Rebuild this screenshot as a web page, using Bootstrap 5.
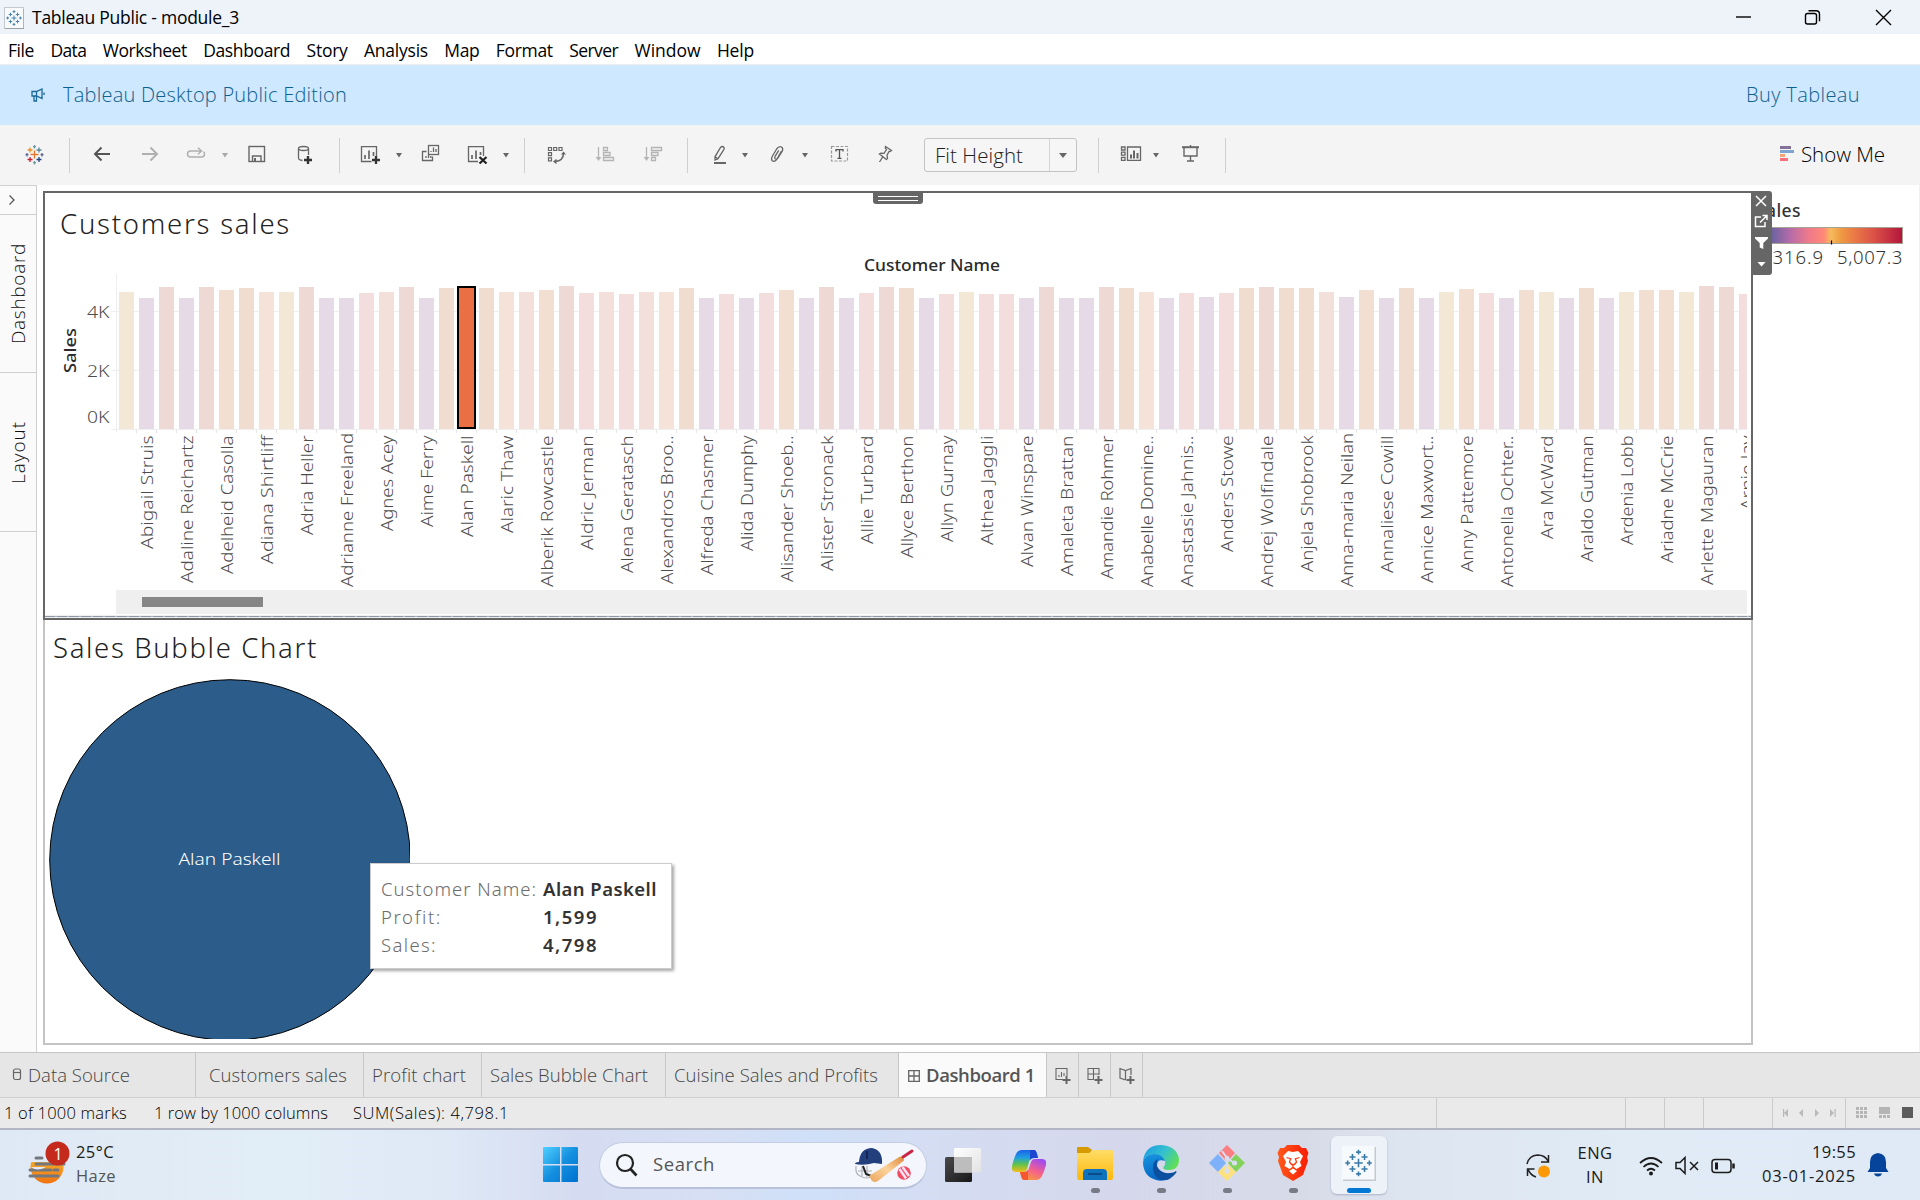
<!DOCTYPE html>
<html lang="en">
<head>
<meta charset="utf-8">
<title>Tableau Public - module_3</title>
<link href="https://cdn.jsdelivr.net/npm/bootstrap@5.3.0/dist/css/bootstrap.min.css" rel="stylesheet">
<style>
body{font-family:"Open Sans","Noto Sans",sans-serif;width:1920px;height:1200px;overflow:hidden;background:#fff;line-height:1;color:#000}
svg{display:block;flex:none}
.fit{white-space:nowrap;flex:none}
.titlebar{height:34px;background:#eef3fa;font-size:17.5px;padding-top:1px}
.menubar{height:31px;gap:16.4px;padding:3px 0 0 8px;font-size:17.5px;border-bottom:1px solid #ececec}
.banner{height:60px;background:#cde8ff;color:#0d608f;font-size:20px;font-weight:350}
.tools{height:60px;background:#f4f4f4;padding-left:22px}
.tools .sep{width:1px;height:35px;background:#cfcfcf;flex:none}
.caret-s{width:8px;height:24px}
.g9{margin-left:9px}.g12{margin-left:12px}.g13{margin-left:13px}.g14{margin-left:14px}.g15{margin-left:15px}.g16{margin-left:16px}.g18{margin-left:18px}.g19{margin-left:19px}.g20{margin-left:20px}.g21{margin-left:21px}.g22{margin-left:22px}.g23{margin-left:23px}.g24{margin-left:24px}.g27{margin-left:27px}
.combo{width:153px;height:34px;border:1px solid #c3c3c3;border-radius:3px;background:#f6f6f6;font-size:20.5px;color:#222;font-weight:350;flex:none}
.combo .arrow{width:27px;border-left:1px solid #d4d4d4}
.workspace{height:867px}
.rail{width:37px;background:#fafafa;border-right:1px solid #cfcfcf;border-top:1px solid #cfcfcf;flex:none}
.rail>div{border-bottom:1px solid #cfcfcf}
.rail .r0{height:29px;padding-left:8px}.rail .r1{height:158px}.rail .r2{height:159px}
.vert{writing-mode:vertical-rl;transform:rotate(180deg);font-size:19px;color:#111;font-weight:350}
.boards{width:1710px;margin-left:6px;padding-top:6px;flex:none}
.zone-top{height:429px;border:2px solid #666}
.zone-low{height:425px;border:2px solid #c4c4c4;border-top:0}
.zone-title{font-family:"Noto Sans","Open Sans",sans-serif;font-size:27.5px;color:#222;font-weight:350}
.zone-top .zone-title{height:57px;padding:17px 0 0 15px}
.zone-low .zone-title{height:55px;padding:14px 0 0 8px}
.grip{left:828px;top:-1px;width:50px;height:12px;background:#666;border-radius:0 0 3px 3px;padding:4px 5px;gap:3px}
.grip i{height:1px;background:#fff}
.side-tools{left:1706px;top:-2px;width:21px;height:84px;background:#666;border-radius:0 3px 3px 0}
.tip{left:325px;top:243px;width:302px;height:106px;background:#fff;border:1px solid #ccc;box-shadow:2px 2px 3px rgba(0,0,0,.35);padding:11px 0 0 10px;font-family:"Noto Sans","Open Sans",sans-serif;font-size:18.5px}
.tip .line{height:28px}
.tip .key{width:162px;color:#6c6c6c;font-weight:300}
.tip .val{font-weight:600;color:#333}
.legend-col{border-right:1px solid #f0f0f0;padding:17px 16px 0 3px;font-family:"Noto Sans","Open Sans",sans-serif}
.ramp{height:17px;border:1px solid #a6a294;margin-top:7px;background:linear-gradient(90deg,#4d5b9c 0,#6a63a0 10%,#b56ca8 23%,#f07a8a 36%,#ff8878 46%,#f6bb5c 51%,#ee9a42 58%,#ea7a45 67%,#dc5347 80%,#b3163c 100%)}
.tabs{height:46px;background:#e6e6e6;border-top:1px solid #c6c6c6;border-bottom:1px solid #cfcfcf;font-size:18.5px;color:#444;font-weight:350}
.tabs>div{border-right:1px solid #c6c6c6;height:44px;flex:none;padding-top:1px}
.t1{width:196px;padding-left:12px}.t2{width:168px;padding-left:13px}.t3{width:118px;padding-left:8px}.t4{width:184px;padding-left:8px}.t5{width:233px;padding-left:8px}.t6{width:148px;padding-left:9px;background:#fafafa;font-weight:600;color:#555}.t7{width:32px;justify-content:center}
.status{height:30px;background:#eaeaea;font-size:16.5px;padding-left:4px}
.status .fit{font-weight:350}
.status .cell{border-left:1px solid #cbcbcb;height:30px;flex:none}
.c1{width:189px}.c2{width:39px}.c4{width:69px}.c5{width:73px}.c6{width:75px}
.taskbar{height:72px;border-top:2px solid #b2b6c4;padding-top:1px;background:linear-gradient(90deg,#dfe9f5 0,#e1edf7 15%,#dfe9f6 23%,#d5dcf1 30%,#d6dff4 37%,#cfe0f8 42%,#d4ddf3 48%,#d5d8ec 58%,#d7dbe8 68%,#dde5f0 73%,#e0ebf6 85%,#dfeaf6 100%);font-size:17px;color:#1b1b1b}
.weather{width:543px;padding-left:27px}
.search-pill{width:328px;height:47px;margin-left:20px;border-radius:24px;background:#f3f6fc;border:1px solid #c3cde2;border-bottom:2px solid #b7c1da;padding:0 12px 0 15px;font-size:18.5px;color:#555}
.app{width:58px;height:58px;border-radius:6px;flex:none}
.app.on{background:#edf1f8;box-shadow:0 1px 2px rgba(60,70,110,.3)}
.app .dot{width:9px;height:5px;border-radius:3px;background:#777b86}
.app.on .dot{width:24px;background:#0078d4}
.lh24{line-height:24px}
</style>
<script src="https://cdn.jsdelivr.net/npm/bootstrap@5.3.0/dist/js/bootstrap.bundle.min.js"></script>
</head>
<body class="d-flex flex-column">
<svg width="0" height="0" class="position-absolute">
 <defs>
  <symbol id="caret" viewBox="0 0 8 24"><path d="M1 10h6L4 14.5z" fill="#666"/></symbol>
  <symbol id="caretdim" viewBox="0 0 8 24"><path d="M1 10h6L4 14.5z" fill="#a8a8a8"/></symbol>
  <symbol id="crosses" viewBox="0 0 24 24">
   <path d="M12 8.500v7M8.500 12h7M7 4.500v5M4.500 7h5M17 4.500v5M14.500 7h5M7 14.500v5M4.500 17h5M17 14.500v5M14.500 17h5M12 1v4M10 3h4M12 19v4M10 21h4M3 10v4M1 12h4M21 10v4M19 12h4" fill="none" stroke="#3b7ba8" stroke-width="1.3"/>
  </symbol>
 </defs>
</svg>

<header class="titlebar d-flex align-items-center">
 <svg width="20" height="22" viewBox="0 0 20 22" style="margin-left:4px"><rect x=".5" y=".5" width="19" height="21" fill="#f8fafc" stroke="#c3c8d0"/><path d="M1 21.500h19V2" fill="none" stroke="#9aa0a8"/><use href="#crosses" x="1.500" y="1.500" width="17" height="19"/></svg>
 <span class="fit ms-2" data-w="207">Tableau Public - module_3</span>
 <svg class="ms-auto" width="184" height="34" viewBox="1736 0.500 184 34" fill="none" stroke="#000" stroke-width="1.4"><path d="M1736 16.500h15"/><rect x="1805.500" y="13" width="11" height="10.500" rx="2"/><path d="M1808.500 10.200h7.500q3.500 0 3.500 3.500v7"/><path d="M1876 9.500l15 15M1891 9.500l-15 15"/></svg>
</header>

<nav class="menubar d-flex align-items-center">
 <span class="fit" data-w="26">File</span><span class="fit" data-w="36">Data</span><span class="fit" data-w="84">Worksheet</span><span class="fit" data-w="87">Dashboard</span><span class="fit" data-w="41">Story</span><span class="fit" data-w="64">Analysis</span><span class="fit" data-w="35">Map</span><span class="fit" data-w="57">Format</span><span class="fit" data-w="49">Server</span><span class="fit" data-w="66">Window</span><span class="fit" data-w="37">Help</span>
</nav>

<div class="banner d-flex align-items-center">
 <svg width="14" height="14" viewBox="0 0 14 14" style="margin-left:31px" fill="none" stroke="#16699a" stroke-width="1.3"><path d="M1 3.500h4.500L11 1v9.500L5.500 8H1zM3 8v5h2.500V8M5.500 3.500V8M13 4.500v2.500"/></svg>
 <span class="fit" style="margin-left:18px" data-w="284">Tableau Desktop Public Edition</span>
 <span class="fit ms-auto" style="margin-right:60px" data-w="114">Buy Tableau</span>
</div>

<div class="tools d-flex align-items-center">
 <svg width="24" height="24" viewBox="0 0 24 24" fill="none" stroke-width="1.300"><path d="M12.500 7.500v8M8.500 11.500h8" stroke="#e8762c"/><path d="M8 4.500v5M5.500 7h5" stroke="#eb9129"/><path d="M17 4.500v5M14.500 7h5" stroke="#5b879b"/><path d="M8 14v5M5.500 16.500h5" stroke="#c72035"/><path d="M17 14v5M14.500 16.500h5" stroke="#1f447e"/><path d="M12.500 2v3.500M11 3.700h3M12.500 18v3.500M11 19.700h3" stroke="#7199a6"/><path d="M5 10v3.500M3.500 11.700H6.500M20 10v3.500M18.500 11.700h3" stroke="#5c6692"/></svg>
 <i class="sep g23"></i>
 <svg class="g20" width="24" height="24" viewBox="0 0 24 24" fill="none" stroke="#555" stroke-width="2"><path d="M20 11H5M11.500 4.500L5 11l6.500 6.500"/></svg>
 <svg class="g24" width="24" height="24" viewBox="0 0 24 24" fill="none" stroke="#b0b0b0" stroke-width="2"><path d="M4 11h15M12.500 4.500L19 11l-6.500 6.500"/></svg>
 <svg class="g22" width="24" height="24" viewBox="0 0 24 24" fill="none" stroke="#b0b0b0" stroke-width="1.500"><path d="M11 8H6.500Q3.500 8 3.500 11t3 3h11q3 0 3-3 0-1.500-1-2.300M8 8h9M14 4.800L17.500 8 14 11.200"/></svg>
 <svg class="caret-s g13"><use href="#caretdim"/></svg>
 <svg class="g16" width="24" height="24" viewBox="0 0 24 24" fill="none" stroke="#666" stroke-width="1.400"><rect x="4" y="3.500" width="15.500" height="15"/><path d="M7.500 18.500V13h8.500v5.500"/><path d="M10 15v3.500" stroke-width="2"/></svg>
 <svg class="g24" width="24" height="24" viewBox="0 0 24 24" fill="none" stroke="#666" stroke-width="1.300"><ellipse cx="10.500" cy="5.500" rx="5" ry="2"/><path d="M5.500 5.500V15q0 2 4 2.500M15.500 5.500V12"/><path d="M15 13v8M11 17h8" stroke="#333" stroke-width="2.400"/></svg>
 <i class="sep g22"></i>
 <svg class="g18" width="24" height="24" viewBox="0 0 24 24" fill="none" stroke="#666" stroke-width="1.300"><path d="M13.500 18.500H3.500V3.600h15V14"/><path d="M7 12v4M11 7.500v8.500M15.500 9v4" stroke-width="1.700"/><path d="M18 13v8M14 17h8" stroke="#333" stroke-width="2.300"/></svg>
 <svg class="caret-s g13"><use href="#caret"/></svg>
 <svg class="g15" width="24" height="24" viewBox="0 0 24 24" fill="none" stroke="#666" stroke-width="1.300"><rect x="10.500" y="2.500" width="10" height="9"/><path d="M8.500 8.500h-4v9h10V13.500M13 9V8M15.500 9V4.500M18 9V6M8 15v-2M10.500 15v-3M12.800 15v-2" /></svg>
 <svg class="g24" width="24" height="24" viewBox="0 0 24 24" fill="none" stroke="#666" stroke-width="1.300"><path d="M12 18.500H2.500V3.600h15V13"/><path d="M6 12v4M10 7.500v8.500M14.500 9v3" stroke-width="1.700"/><path d="M13.500 14l7 6.500M20.500 14l-7 6.500" stroke="#222" stroke-width="2.300"/></svg>
 <svg class="caret-s g12"><use href="#caret"/></svg>
 <i class="sep g14"></i>
 <svg class="g19" width="24" height="24" viewBox="0 0 24 24" fill="none" stroke="#666" stroke-width="1.200"><path d="M4.500 4.500h3v3h-3zM9.700 4.500h3v3h-3zM15 4.500h3v3h-3zM4.500 9.700h3v3h-3zM4.500 14.800h3v3h-3z"/><path d="M19.500 10q0 8-8.500 8.500" stroke-width="1.500"/><path d="M17 11.500l2.600-3 2.400 3zM12.500 15.700L9 18.500l3.500 2.700z" fill="#666" stroke="none"/></svg>
 <svg class="g24" width="24" height="24" viewBox="0 0 24 24" fill="none" stroke="#b4b4b4" stroke-width="1.300"><path d="M6.500 4v11M11.500 4.500h4v3h-4zM11.500 9.500h6.500v3h-6.500zM11.500 14.500h10v3h-10z"/><path d="M3.700 14h5.600l-2.800 4z" fill="#b4b4b4" stroke="none"/></svg>
 <svg class="g24" width="24" height="24" viewBox="0 0 24 24" fill="none" stroke="#b4b4b4" stroke-width="1.300"><path d="M6.500 4v11M11.500 4.500h10v3h-10zM11.500 9.500h6.500v3h-6.500zM11.500 14.500h4v3h-4z"/><path d="M3.700 14h5.600l-2.800 4z" fill="#b4b4b4" stroke="none"/></svg>
 <i class="sep g23"></i>
 <svg class="g20" width="24" height="24" viewBox="0 0 24 24" fill="none" stroke="#666" stroke-width="1.300"><path d="M12.500 4.500q2-2 3.500 0 .5 1-.2 2.200l-5.800 9-3 1.300v-3.200zM7 13.800l3 1.900"/><path d="M6 20h12" stroke-width="2"/></svg>
 <svg class="caret-s g9"><use href="#caret"/></svg>
 <svg class="g16" width="24" height="24" viewBox="0 0 24 24" fill="none" stroke="#666" stroke-width="1.300"><path d="M16.500 8l-4.700 8.300q-2.300 3-4.500 1.500-1.500-1.500-.2-4l4.500-7.800q2.500-3.500 5-2 2 1.500.5 4.500l-4.200 6.500q-1.500 1.700-2.700.8-1-.8-.1-2.500l3.600-6"/></svg>
 <svg class="caret-s g12"><use href="#caret"/></svg>
 <svg class="g18" width="24" height="24" viewBox="0 0 24 24" fill="none"><rect x="4.500" y="3.500" width="16" height="14.500" stroke="#999" stroke-width="1.200" stroke-dasharray="3 1.500"/><path d="M9 8.500V6.700h7v1.800M12.500 6.700v8.600M10.500 15.300h4" stroke="#555" stroke-width="1.300"/></svg>
 <svg class="g22" width="24" height="24" viewBox="0 0 24 24" fill="none" stroke="#666" stroke-width="1.300"><path d="M12.500 3.500l6 4-1.500 1-.8-.3-2.200 4 .5 3.300-1.200 1L6.500 11l1.300-.8 3.200.2 2.500-3.800-1.200-1.500zM10 13.500l-3.500 5.500"/></svg>
 <div class="combo g27 d-flex"><span class="flex-fill d-flex align-items-center" style="padding-left:10px"><span class="fit" data-w="88">Fit Height</span></span><span class="arrow d-flex align-items-center justify-content-center"><svg width="8" height="5"><path d="M0 0h8L4 5z" fill="#666"/></svg></span></div>
 <i class="sep g21"></i>
 <svg class="g20" width="24" height="24" viewBox="0 0 24 24" fill="none" stroke="#666" stroke-width="1.300"><path d="M2.500 4H6v3H2.500zM2.500 9.200H6v3H2.500zM2.500 14.300H6v3H2.500zM8.500 4h13v13.300h-13z"/><path d="M12 15.500v-4M15 15.500v-8M18.500 15.500V10" stroke-width="2"/></svg>
 <svg class="caret-s g9"><use href="#caret"/></svg>
 <svg class="g18" width="24" height="24" viewBox="0 0 24 24" fill="none" stroke="#666" stroke-width="1.400"><path d="M4 4.200h17" stroke-width="2"/><path d="M6 4.500V13h13V4.500M12.500 13v4.500M9 18h7M12.500 2v2"/></svg>
 <i class="sep g23"></i>
 <svg class="ms-auto" width="14" height="16" style="margin-bottom:2px"><path d="M0 0h11v3H0z" fill="#84719b"/><path d="M0 4h14v3H0z" fill="#7fa4d0"/><path d="M0 8h5v3H0z" fill="#f4a379"/><path d="M0 12h8v3H0z" fill="#fb6e7c"/></svg>
 <span class="fit" style="font-size:20.5px;font-weight:350;margin:0 35px 2px 7px" data-w="84">Show Me</span>
</div>

<main class="workspace d-flex">
 <aside class="rail d-flex flex-column">
  <div class="r0 d-flex align-items-center"><svg width="8" height="10" fill="none" stroke="#555" stroke-width="1.300"><path d="M1.500.5L6 5 1.500 9.500"/></svg></div>
  <div class="r1 d-flex align-items-center justify-content-center"><span class="fit vert" data-w="101">Dashboard</span></div>
  <div class="r2 d-flex align-items-center justify-content-center"><span class="fit vert" data-w="63">Layout</span></div>
 </aside>
 <section class="boards">
  <div class="zone-top position-relative">
   <div class="zone-title"><span class="fit" data-w="231">Customers sales</span></div>
   <svg id="barchart" width="1706" height="368" viewBox="45 250 1706 368"></svg>
   <div class="grip position-absolute d-flex flex-column"><i></i><i></i></div>
   <svg class="side-tools position-absolute" viewBox="0 0 21 84" fill="none" stroke="#fff" stroke-width="1.500"><path d="M5 5l10 10M15 5L5 15"/><path d="M10 26H4.500v9.500H14V31M9 31.500l6.500-6.500M11.500 24.500H16V29"/><path d="M4 46h13v1.500l-4.700 4.500v6l-3.600-1.500V52L4 47.500z" fill="#fff" stroke="none"/><path d="M6.500 71h8L10.500 75.500z" fill="#fff" stroke="none"/></svg>
  </div>
  <div class="zone-low position-relative">
   <div class="zone-title"><span class="fit" data-w="265">Sales Bubble Chart</span></div>
   <svg width="1704" height="368" viewBox="45 675 1704 368">
    <defs><clipPath id="bubbleclip"><path d="M45 675h365v364H45z"/></clipPath></defs>
    <circle cx="230" cy="860" r="180.300" fill="#2c5c8a" stroke="#000" clip-path="url(#bubbleclip)"/>
    <text x="178.500" y="865" font-family="Noto Sans" font-size="17" font-weight="300" fill="#fff" textLength="102" lengthAdjust="spacingAndGlyphs">Alan Paskell</text>
   </svg>
   <div class="tip position-absolute">
    <div class="line d-flex align-items-center"><span class="key"><span class="fit" data-w="156">Customer Name:</span></span><span class="val fit" data-w="114">Alan Paskell</span></div>
    <div class="line d-flex align-items-center"><span class="key"><span class="fit" data-w="61">Profit:</span></span><span class="val fit" data-w="55">1,599</span></div>
    <div class="line d-flex align-items-center"><span class="key"><span class="fit" data-w="56">Sales:</span></span><span class="val fit" data-w="55">4,798</span></div>
   </div>
  </div>
 </section>
 <aside class="legend-col flex-fill d-flex flex-column">
  <span class="fit" style="font-size:17.5px;color:#333;font-weight:500;align-self:flex-start" data-w="45">Sales</span>
  <div class="ramp"><svg width="80" height="18"><path d="M74.500 12.500v4" stroke="#000" stroke-width="1.200"/></svg></div>
  <div class="d-flex justify-content-between" style="font-size:18.5px;color:#333;font-weight:300;padding-top:4px"><span class="fit" data-w="68">4,316.9</span><span class="fit" data-w="66">5,007.3</span></div>
 </aside>
</main>

<div class="tabs d-flex">
 <div class="t1 d-flex align-items-center"><svg width="10" height="13" style="margin-bottom:2px" fill="none" stroke="#666" stroke-width="1.200"><rect x="1.500" y="1" width="7" height="10.500" rx="2"/><path d="M1.500 4.500h7"/></svg><span class="fit" style="margin-left:6px" data-w="102">Data Source</span></div>
 <div class="t2 d-flex align-items-center"><span class="fit" data-w="138">Customers sales</span></div>
 <div class="t3 d-flex align-items-center"><span class="fit" data-w="94">Profit chart</span></div>
 <div class="t4 d-flex align-items-center"><span class="fit" data-w="158">Sales Bubble Chart</span></div>
 <div class="t5 d-flex align-items-center"><span class="fit" data-w="204">Cuisine Sales and Profits</span></div>
 <div class="t6 d-flex align-items-center"><svg width="12" height="12" fill="none" stroke="#666" stroke-width="1.300"><path d="M.7.700h10.600v10.600H.700zM6 .700v10.600M.700 6h10.600"/></svg><span class="fit" style="margin-left:6px" data-w="109">Dashboard 1</span></div>
 <div class="t7 d-flex align-items-center"><svg width="18" height="18" viewBox="0 0 18 18" fill="none" stroke="#666" stroke-width="1.100"><path d="M9 12.500H2v-11h11V9M5 10V8M7.500 10V5M10 9V6"/><path d="M12.500 9v8M8.500 13h8" stroke-width="2"/></svg></div>
 <div class="t7 d-flex align-items-center"><svg width="18" height="18" viewBox="0 0 18 18" fill="none" stroke="#666" stroke-width="1.100"><path d="M8 12.500H2v-11h11V8M7.500 1.500v11M2 7h11"/><path d="M12.500 9v8M8.500 13h8" stroke-width="2"/></svg></div>
 <div class="t7 d-flex align-items-center"><svg width="18" height="18" viewBox="0 0 18 18" fill="none" stroke="#666" stroke-width="1.200"><path d="M7.500 13L2 11V1.500l5.500 2L13 1.500V8M7.500 3.500V13"/><path d="M12.500 9v8M8.500 13h8" stroke-width="2"/></svg></div>
</div>

<div class="status d-flex align-items-center">
 <span class="fit" data-w="123">1 of 1000 marks</span>
 <span class="fit" style="margin-left:27px" data-w="174">1 row by 1000 columns</span>
 <span class="fit" style="margin-left:25px" data-w="156">SUM(Sales): 4,798.1</span>
 <div class="cell c1 ms-auto"></div><div class="cell c2"></div><div class="cell c2"></div><div class="cell c4"></div>
 <div class="cell c5 d-flex align-items-center"><svg width="72" height="16" fill="#b9b9b9"><path d="M10 4h1.200v8H10zM15 4v8l-4-4zM30 4v8l-4-4zM42 4v8l4-4zM57 4v8l4-4zM61.500 4h1.200v8h-1.200z"/></svg></div>
 <div class="cell c6 d-flex align-items-center"><svg width="70" height="12" fill="#b5b5b5"><path d="M10 0h3v3h-3zM14 0h3v3h-3zM18 0h3v3h-3zM10 4h3v3h-3zM14 4h3v3h-3zM18 4h3v3h-3zM10 8h3v3h-3zM14 8h3v3h-3zM18 8h3v3h-3zM33 0h11v7H33zM33 8h3v3h-3zM37 8h3v3h-3zM41 8h3v3h-3z"/><path d="M56 0h11v11H56z" fill="#5c5c5c"/></svg></div>
</div>

<footer class="taskbar d-flex align-items-center">
 <div class="weather d-flex align-items-center">
  <svg width="44" height="48" viewBox="27 1136 44 48" style="margin-bottom:4px"><defs><linearGradient id="sun" x1="0" y1="0" x2="0" y2="1"><stop offset="0" stop-color="#f8c534"/><stop offset="1" stop-color="#f1720f"/></linearGradient></defs><circle cx="47" cy="1163" r="16.500" fill="url(#sun)"/><path d="M28 1145h42v13H28z" fill="#e0e9f5"/><path d="M36 1154h6M36 1160h28M30 1166h21M54 1166h4M30 1172h28" stroke="#737880" stroke-width="3" stroke-linecap="round"/><path d="M31 1163q6 5 15 0z" fill="#e0e9f5"/><circle cx="57.500" cy="1149.500" r="12" fill="#c42b1c"/><text x="53.500" y="1155.500" font-size="16" fill="#fff">1</text></svg>
  <div class="lh24" style="margin:0 0 3px 5px;font-size:16.5px"><div><span class="fit" data-w="38">25°C</span></div><div style="color:#555"><span class="fit" data-w="40">Haze</span></div></div>
 </div>
 <svg width="36" height="36" style="margin-top:-1px"><defs><linearGradient id="win" x1="0" y1="0" x2="1" y2="1"><stop offset="0" stop-color="#4fd0ff"/><stop offset=".5" stop-color="#1490df"/><stop offset="1" stop-color="#0070cf"/></linearGradient></defs><path d="M1 0h16v17H0V1q0-1 1-1zM18.500 0H34q1 0 1 1v16H18.500zM0 18.500h17V35H1q-1 0-1-1zM18.500 18.500H35V34q0 1-1 1H18.500z" fill="url(#win)"/></svg>
 <div class="search-pill d-flex align-items-center" style="margin-bottom:1px">
  <svg width="24" height="24" fill="none" stroke="#222" stroke-width="2.200"><circle cx="10" cy="10" r="8"/><path d="M15.500 16l6 6.500" stroke-width="2.600"/></svg>
  <span class="fit" style="margin-left:14px" data-w="62">Search</span>
  <svg class="ms-auto" width="60" height="36" viewBox="0 0 60 36"><defs><linearGradient id="bat" x1="0" y1="1" x2="1" y2="0"><stop offset="0" stop-color="#e9a45c"/><stop offset=".5" stop-color="#fcd39b"/><stop offset="1" stop-color="#e08a3c"/></linearGradient></defs><path d="M2 19q-1 8 4 10 7 4 13 0M4 24h14M8 19v10M13 19v11" fill="none" stroke="#b0b3b8" stroke-width="1.200"/><path d="M9 19l3 8 8 3" fill="none" stroke="#222" stroke-width="2"/><path d="M5 15Q6 1 18 1q11 2 10 16l-8-1Q10 19 1 17q0-2 4-2z" fill="#24407c"/><path d="M13 12V4" stroke="#101f4a" stroke-width="1.600"/><path d="M15 29L46 9.500q4 .5 4 4L24 34q-3 2-6 0z" fill="url(#bat)"/><path d="M49 10l9-6" stroke="#c92443" stroke-width="3" stroke-linecap="round"/><circle cx="50" cy="26" r="6.800" fill="#f04c62"/><path d="M45.500 22l6.500 9.500M48.500 20l6.500 9" stroke="#fbe1f5" stroke-width="2.500"/></svg>
 </div>
 <div class="app d-flex align-items-center justify-content-center" style="margin-left:7px;margin-bottom:1px"><svg width="36" height="34"><defs><linearGradient id="tv1" x1="0" y1="0" x2="1" y2="1"><stop offset="0" stop-color="#4a4a4a"/><stop offset="1" stop-color="#181818"/></linearGradient><linearGradient id="tv2" x1="0" y1="0" x2="1" y2="1"><stop offset="0" stop-color="#fff"/><stop offset="1" stop-color="#e2e2e2"/></linearGradient></defs><rect y="9" width="27" height="25" rx="1.500" fill="url(#tv1)"/><rect x="9" width="27" height="24.500" rx="1.500" fill="url(#tv2)"/><path d="M9 9h18v15.500H9z" fill="#bdbdbd"/></svg></div>
 <div class="app d-flex align-items-center justify-content-center" style="margin-left:8px;margin-bottom:1px"><svg width="34" height="31" viewBox="0 0 34 31"><defs><linearGradient id="cp1" x1="0" y1="0" x2="0" y2="1"><stop offset="0" stop-color="#1b62e8"/><stop offset=".35" stop-color="#1f9fe0"/><stop offset=".65" stop-color="#5fc34c"/><stop offset="1" stop-color="#f6bd17"/></linearGradient><linearGradient id="cp2" x1=".7" y1="0" x2=".2" y2="1"><stop offset="0" stop-color="#a04bf0"/><stop offset=".5" stop-color="#f4608e"/><stop offset="1" stop-color="#f9a035"/></linearGradient></defs><path d="M10 0h12q2 0 3 4l1 4h-4q-4 0-5 4l-2 7q-1 3-4 3H4q-5 0-4-6Q2 8 4 4q2-4 6-4z" fill="url(#cp1)"/><path d="M18 0h4q2 0 3 4l1 4h-4q-3 0-4 2 0-5 0-10z" fill="#1d47d1"/><path d="M24 30H12q-2 0-3-4l-1-4h4q4 0 5-4l2-6q1-3 4-3h7q5 0 4 6-2 7-4 11-2 4-6 4z" fill="url(#cp2)"/><path d="M16 30h-4q-2 0-3-4l-1-4h4q3 0 4-2z" fill="#f5572f"/></svg></div>
 <div class="app d-flex flex-column align-items-center" style="margin-left:8px;padding-top:11px;margin-bottom:1px"><svg width="36" height="34"><defs><linearGradient id="fold" x1="0" y1="0" x2="0" y2="1"><stop offset="0" stop-color="#ffdd67"/><stop offset="1" stop-color="#fcb70c"/></linearGradient></defs><path d="M1 0h10l4 3-3 4H0V1q0-1 1-1z" fill="#d79a00"/><path d="M0 6h12l4-3h19q1 0 1 1v27q0 2-2 2H2q-2 0-2-2z" fill="url(#fold)"/><path d="M6 33v-7q0-4 4-4h16q4 0 4 4v7z" fill="#0e72bd"/><path d="M11 27h14" stroke="#0b4c86" stroke-width="2"/></svg><i class="dot" style="margin-top:7px"></i></div>
 <div class="app d-flex flex-column align-items-center" style="margin-left:8px;padding-top:9px;margin-bottom:1px"><svg width="36" height="36" viewBox="0 0 36 36"><defs><linearGradient id="ed1" x1="0" y1=".2" x2="1" y2=".7"><stop offset="0" stop-color="#1b9de2"/><stop offset=".5" stop-color="#35c1cf"/><stop offset="1" stop-color="#62e04f"/></linearGradient><linearGradient id="ed2" x1="0" y1="0" x2=".3" y2="1"><stop offset="0" stop-color="#1696e0"/><stop offset="1" stop-color="#0766c4"/></linearGradient></defs><path d="M0 16Q2 0 18 0q16 1 18 14 0 11-10 11-5 0-6-2 3-4 2-7-3-6-12-7Q2 10 0 16z" fill="url(#ed1)"/><path d="M0 17Q2 9 11 9q8 0 11 7-8-3-8 5 1 10 12 12-6 4-13 2Q0 31 0 17z" fill="url(#ed2)"/><path d="M10 22q0-6 5-8-3 5 0 9 4 6 12 5 4 0 6-2 1 0 0 2-7 9-15 7-8-3-8-13z" fill="#0c4f9e"/></svg><i class="dot" style="margin-top:7px"></i></div>
 <div class="app d-flex flex-column align-items-center" style="margin-left:8px;padding-top:9px;margin-bottom:1px"><svg width="36" height="36" viewBox="0 0 36 36"><path d="M18 0l8 8-8 9-8-9z" fill="#fb7e81"/><path d="M9 9l8 9-8 9-9-9z" fill="#7fb1fb"/><path d="M27 9l9 9-9 9-8-9z" fill="#82d25c"/><path d="M18 19l9 8-9 9-9-9z" fill="#fde17c"/><path d="M13 6l5 7v13M18 13l7 5" fill="none" stroke="#dadff0" stroke-width="2"/><circle cx="18" cy="13" r="2.300" fill="#dadff0"/><circle cx="25.500" cy="18" r="2.600" fill="#dadff0"/><circle cx="18" cy="26" r="2.600" fill="#dadff0"/></svg><i class="dot" style="margin-top:7px"></i></div>
 <div class="app d-flex flex-column align-items-center" style="margin-left:8px;padding-top:9px;margin-bottom:1px"><svg width="32" height="36" viewBox="0 0 32 36"><defs><linearGradient id="br" x1="0" y1="0" x2="1" y2="0"><stop offset="0" stop-color="#ff5a1a"/><stop offset="1" stop-color="#f91c04"/></linearGradient></defs><path d="M10 0h12l3 3h4l2.500 5L30 12l1 4-5 14-10 6-10-6L1 16l1-4L.500 8 3 3h4z" fill="url(#br)"/><path d="M16 7l5-1 5 5-3 6 1.500 4-5 3-3.500-2.500L12.500 24l-5-3L9 17l-3-6 5-5zM16 23.500l4 2.500-4 3.500L12 26z" fill="#fff"/><path d="M9.500 12.500l5 1.500M22.500 12.500l-5 1.500M13.500 14l-1 3 2 2.500h3l2-2.500-1-3M16 19.500V22" fill="none" stroke="#fb3b0d" stroke-width="1.300"/></svg><i class="dot" style="margin-top:7px"></i></div>
 <div class="app on d-flex flex-column align-items-center" style="margin-left:9px;padding-top:10px;margin-bottom:1px;width:56px"><svg width="34" height="35" viewBox="0 0 34 35"><path d="M1 1h33v34H1z" fill="#c4c8cf"/><path d="M0 0h32.500v33.500H0z" fill="#f7fafd"/><use href="#crosses" x="2" y="2" width="29" height="30"/></svg><i class="dot" style="margin-top:7px"></i></div>
 <svg width="26" height="26" viewBox="0 0 26 26" style="margin-left:138px" fill="none" stroke="#222" stroke-width="1.500"><path d="M2 11Q4 2.500 12.500 2 20 2 23 8M23.500 2v7H16M11 24Q5 22 3 16M2.500 23v-7h7"/><circle cx="19" cy="18.500" r="6" fill="#fb9a05" stroke="none"/></svg>
 <div class="lh24 text-center" style="width:36px;margin-left:26px;margin-bottom:1px;font-size:16.500px"><div><span class="fit" data-w="35">ENG</span></div><div><span class="fit" data-w="18">IN</span></div></div>
 <svg width="98" height="26" viewBox="1641 1150.500 98 26" style="margin-left:26px" fill="none" stroke="#1b1b1b" stroke-width="1.700"><path d="M1642 1160.500q11-10 22 0M1645.500 1164.500q7.500-7 15 0M1649 1168q4-3.500 8 0"/><circle cx="1653" cy="1171" r="2" fill="#1b1b1b" stroke="none"/><path d="M1678 1160h4l5-5v16l-5-5h-4zM1692 1159.500l8 8M1700 1159.500l-8 8" stroke-width="1.500"/><rect x="1714" y="1157" width="19" height="13" rx="3" stroke-width="1.500"/><path d="M1717 1160h3v7h-3z" fill="#1b1b1b" stroke="none"/><path d="M1735.500 1161v5" stroke-width="2.500"/></svg>
 <div class="lh24 text-end ms-auto" style="margin-bottom:3px;font-size:16.500px"><div><span class="fit" data-w="44">19:55</span></div><div><span class="fit" data-w="94">03-01-2025</span></div></div>
 <svg width="22" height="24" style="margin:0 31px 1px 11px" fill="#06439a"><path d="M11 0q8 1 8 9v6l2.500 4H.500L3 15V9q0-8 8-9zM7 20.500h8q-1 3-4 3t-4-3z"/></svg>
</footer>

<script>
// Customer bars: [top y, colour key] in chart units; labels sit under every second bar.
const palette={y:'#f3e8d6',p:'#e5dae5',r:'#efd9d4',t:'#f2dfd2',d:'#f1dcd0',c:'#f5e3da',k:'#f3dedd',o:'#f4e0db'};
const bars=('292y 298p 287r 298p 287r 290t 288d 292c 292y 287r 298p 298p 293k 292o 287r 298p 288d 287s 288d 292c 292o 290t 286r 293k 292o 294k 292o '+
'292c 288d 298p 294k 298p 293k 290t 298p 287r 298p 293k 287r 288d 298p 294k 292y 294k 294k 298p 287r 298p 298p 287r 288d 292c 298p 293k 297p 293k 288d 287r '+
'288d 288d 292o 297p 290t 298p 288d 298p 292y 289t 293k 298p 290t 292y 298p 288d 298p 292y 290t 290t 292y 286r 287r 294k').split(' ');
const names=[['Abigail Struis',549],['Adaline Reichartz',583],['Adelheid Casolla',574],['Adiana Shirtliff',564],['Adria Heller',535],['Adrianne Freeland',587,433],['Agnes Acey',531],['Aime Ferry',527],['Alan Paskell',537],['Alaric Thaw',533],['Alberik Rowcastle',587],['Aldric Jerman',550],['Alena Geratasch',573],['Alexandros Broo..',584],['Alfreda Chasmer',575],['Alida Dumphy',551],['Alisander Shoeb..',582],['Alister Stronack',571],['Allie Turbard',544],['Allyce Berthon',558],['Allyn Gurnay',542],['Althea Jaggli',545],['Alvan Winspare',567],['Amaleta Brattan',576],['Amandie Rohmer',579],['Anabelle Domine..',587],['Anastasie Jahnis..',587],['Anders Stowe',552],['Andrej Wolfindale',587],['Anjela Shobrook',572],['Anna-maria Neilan',587,433],['Annaliese Cowill',573],['Annice Maxwort..',583],['Anny Pattemore',572],['Antonella Ochter..',587],['Ara McWard',539],['Araldo Gutman',562],['Ardenia Lobb',545],['Ariadne McCrie',563],['Arlette Magauran',585],['Arnie Jay',510]];
const light='font-family="Noto Sans" font-size="17" font-weight="300" fill="#4c4c4c" lengthAdjust="spacingAndGlyphs"';
const strong='font-family="Noto Sans" font-size="17" font-weight="500" fill="#2a2a2a" lengthAdjust="spacingAndGlyphs"';
let s='<defs><clipPath id="plot"><path d="M45 250h1702v368H45z"/></clipPath></defs><g clip-path="url(#plot)">';
s+='<path d="M116.500 274v158M111 311.500h1636M111 370.500h1636M111 429.500h1636" stroke="#efefef" fill="none"/>';
bars.forEach((b,i)=>{const y=+b.slice(0,3),x=119+20*i,k=b[3];
 s+=`<path d="M${x+17.500} 430v3" stroke="#e6e6e6"/>`;
 if(k!=='s')s+=`<rect x="${x}" y="${y}" width="15" height="${429-y}" fill="${palette[k]}"/>`;});
s+='<rect x="458" y="287" width="17" height="141" fill="#eb6f45" stroke="#000" stroke-width="2"/>';
names.forEach((n,i)=>{const x=152.500+40*i,t=n[2]||435.500;
 s+=`<text transform="translate(${x} ${n[1]}) rotate(-90)" ${light} textLength="${n[1]-t}">${n[0]}</text>`;});
s+='<rect x="116" y="590" width="1631" height="24" fill="#efefef"/><rect x="142" y="597" width="121" height="10" fill="#868686"/></g>';
s+='<path d="M45 616.500h1706" stroke="#b8bcc4" stroke-width="1.500"/><path d="M45 616.500h1706" stroke="#8d97a8" stroke-dasharray="10 2"/>';
[['4K',317.500],['2K',376.500],['0K',423]].forEach(a=>s+=`<text x="87" y="${a[1]}" ${light} textLength="22.500">${a[0]}</text>`);
s+=`<text x="864" y="270.500" ${strong} textLength="136">Customer Name</text>`;
s+=`<text transform="translate(75.500 373) rotate(-90)" ${strong} textLength="45">Sales</text>`;
document.getElementById('barchart').innerHTML=s;
// Track each label out to its design width.
document.querySelectorAll('.fit').forEach(e=>{const v=e.classList.contains('vert');
 const w=v?e.getBoundingClientRect().height:e.getBoundingClientRect().width;
 e.style.letterSpacing=((+e.dataset.w-w)/e.textContent.length)+'px';});
</script>
</body>
</html>
